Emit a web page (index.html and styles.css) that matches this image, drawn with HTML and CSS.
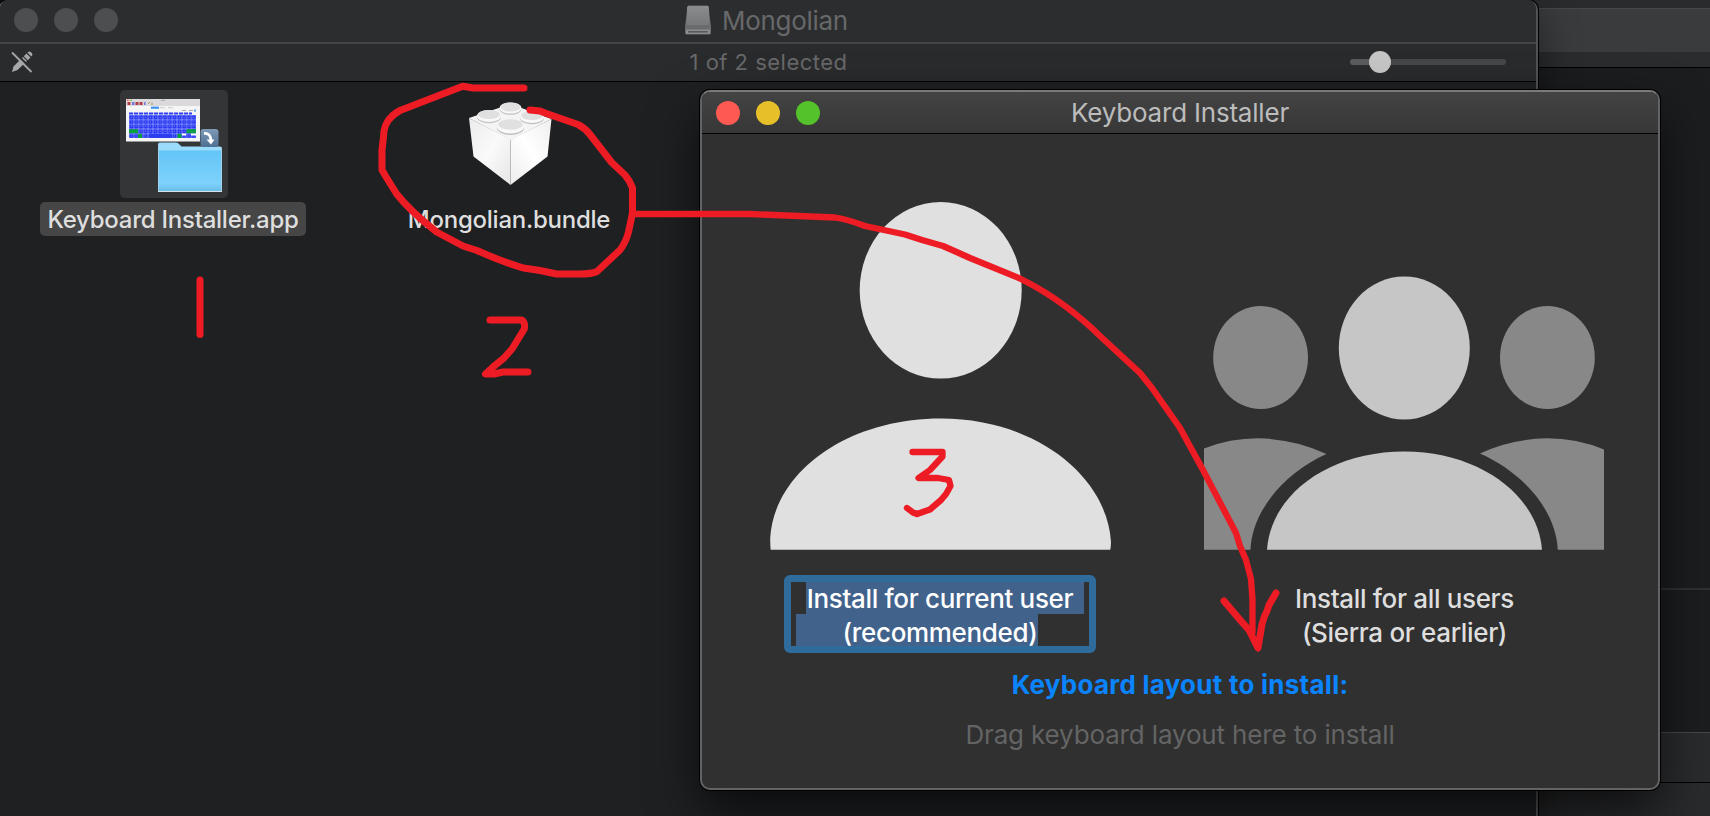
FILE: index.html
```
<!DOCTYPE html>
<html lang="en">
<head>
<meta charset="utf-8">
<title>Keyboard Installer</title>
<link rel="stylesheet" href="styles.css">
</head>
<body>
<div class="desktop">
  <section class="back-window">
    <div class="back-top"></div>
    <div class="back-tabs"></div>
    <div class="back-strip"></div>
    <div class="back-pane"></div>
    <div class="back-pane back-pane-low"></div>
    <div class="back-status"></div>
    <div class="back-foot"></div>
  </section>

  <section class="finder">
    <header class="finder-title">
      <div class="lights lights-off"><i></i><i></i><i></i></div>
      <div class="finder-name">
        <svg width="26" height="30" viewBox="0 0 26 30">
          <defs><linearGradient id="drive" x1="0" y1="0" x2="0" y2="1"><stop offset="0" stop-color="#8b8c8e"/><stop offset="1" stop-color="#77787a"/></linearGradient></defs>
          <path d="M3 .5H23L26 21V27.500Q26 29.500 24.500 29.500H1.500Q0 29.500 0 27.500V21Z" fill="#6a6b6d"/>
          <path d="M3.500 1H22.500Q24 1 24 3L24.500 19Q24.500 20 23 20H3Q1.500 20 1.500 19L2 3Q2 1 3.500 1Z" fill="url(#drive)"/>
          <path d="M1 24.500H25V29H1Z" fill="#8c8d8f"/>
          <path d="M3 26.800H23" stroke="#56575a" stroke-width="1.500"/>
        </svg>
        <span>Mongolian</span>
      </div>
    </header>
    <div class="finder-bar">
      <svg class="pencil" width="22" height="22" viewBox="0 0 22 22">
        <path d="M1 21L2.500 15.500L12 6L16 10L6.500 19Z" fill="#a6a7a8"/>
        <path d="M12.800 5.200L15.500 2.500L19.500 6.500L16.800 9.200Z" fill="#a6a7a8"/>
        <path d="M16.500 1.700L17.500 .7Q18.700 0 20 1.200L20.800 2Q22 3.500 21 4.700L20.300 5.500Z" fill="#a6a7a8"/>
        <path d="M2.500 0L22 19.500" stroke="#2c2d2f" stroke-width="2.200"/>
        <path d="M1 1.500L20.500 21" stroke="#a6a7a8" stroke-width="1.800"/>
      </svg>
      <span class="status">1 of 2 selected</span>
      <div class="slider"><i class="knob"></i></div>
    </div>
    <div class="files">
      <div class="file selected">
        <div class="thumb">
          <svg width="108" height="108" viewBox="0 0 108 108">
            <defs>
              <linearGradient id="folder" x1="0" y1="0" x2="0" y2="1"><stop offset="0" stop-color="#63c5f7"/><stop offset=".8" stop-color="#7ed2fb"/><stop offset="1" stop-color="#68bce6"/></linearGradient>
              <linearGradient id="badge" x1="0" y1="0" x2="0" y2="1"><stop offset="0" stop-color="#7e9bb8"/><stop offset="1" stop-color="#4d6f91"/></linearGradient>
              <pattern id="keys" width="4.800" height="4.700" patternUnits="userSpaceOnUse" x="9" y="25"><rect width="4.800" height="4.700" fill="#98a3ff"/><rect x=".4" y=".4" width="4" height="3.800" fill="#1c2df0"/><rect x="1.700" y="1.600" width="1.300" height="1.200" fill="#7b86fa"/></pattern>
            </defs>
            <rect x="6" y="9" width="74" height="42.500" fill="#f5f5f6"/>
            <rect x="6" y="9" width="74" height="7" fill="#dcd9dc"/>
            <path d="M7 10.300H8.500" stroke="#e55" stroke-width="1.200"/><path d="M9 10.300H10.200" stroke="#eb4" stroke-width="1.200"/><path d="M10.800 10.300H12" stroke="#5b5" stroke-width="1.200"/>
            <path d="M41 10.300H45" stroke="#999" stroke-width=".8"/>
            <path d="M7.500 13.500H10.500M15.500 13.500H18.500M19.500 13.500H22.500" stroke="#b23b45" stroke-width="3"/>
            <path d="M12 13.500H14.500M24 13.500H25.500" stroke="#7377dd" stroke-width="2.800"/>
            <path d="M28 14L30 12M32 12.500V15" stroke="#aa9a60" stroke-width="1"/>
            <rect x="31" y="16.600" width="8" height="2.200" fill="#3d93f2"/><path d="M40 17.700H45M48 17.700H53" stroke="#c9c9cb" stroke-width="1"/>
            <path d="M62 20.500H66M69 20.500H73" stroke="#aaa" stroke-width="1"/><rect x="74" y="19.400" width="2" height="2.200" fill="#6ca7ee"/>
            <path d="M9 23.500H72" stroke="#2d3df0" stroke-width="2" stroke-dasharray="4.200 .8"/>
            <rect x="9" y="25" width="67" height="23" fill="url(#keys)"/>
            <rect x="9" y="39.200" width="9" height="4" fill="#08a043"/><rect x="66.500" y="39.200" width="9.500" height="4" fill="#08a043"/>
            <rect x="18" y="43.800" width="4" height="4.200" fill="#08a043"/><rect x="57.500" y="43.800" width="4" height="4.200" fill="#08a043"/>
            <rect x="29" y="43.800" width="23" height="4.200" fill="#2c3ff0"/>
            <path d="M62 44.500H66M71 44.500H76" stroke="#fff" stroke-width="1.800"/>
            <path d="M38 102V54.500Q38 52.500 40 52.500H56Q58 52.500 59 54L61.500 56.500H100Q102 56.500 102 58.500V102H38Z" fill="#9bdbfb"/>
            <path d="M38.500 60.500H101.500V101.500H38.500Z" fill="url(#folder)"/>
            <path d="M38 101.500H102" stroke="#d7e2e8" stroke-width="1"/>
            <path d="M38.500 54V101M101.500 58V101" stroke="#a9cfe3" stroke-width=".8"/>
            <rect x="80.500" y="39" width="18" height="18" rx="3" fill="url(#badge)"/>
            <path d="M84 43.500Q91 43 91 51" fill="none" stroke="#fff" stroke-width="2.800"/>
            <path d="M86.500 49.500H94.500L91 54.500Z" fill="#fff"/>
          </svg>
        </div>
        <span class="file-name">Keyboard Installer.app</span>
      </div>
      <div class="file">
        <div class="thumb">
          <svg width="108" height="108" viewBox="0 0 108 108">
            <defs>
              <linearGradient id="brickL" x1="0" y1="0" x2="1" y2="1"><stop offset="0" stop-color="#ececec"/><stop offset=".5" stop-color="#fafafa"/><stop offset="1" stop-color="#e6e6e6"/></linearGradient>
              <linearGradient id="brickR" x1="0" y1="1" x2="1" y2="0"><stop offset="0" stop-color="#ececec"/><stop offset=".5" stop-color="#fff"/><stop offset="1" stop-color="#efefef"/></linearGradient>
            </defs>
            <path d="M14 28L55.500 14L96.500 29L55.500 50Z" fill="#f4f4f4"/>
            <path d="M14 28L55.500 49.500V95L18.500 66.500Z" fill="url(#brickL)"/>
            <path d="M96.500 29L55.500 49.500V95L92.500 66.500Z" fill="url(#brickR)"/>
            <g fill="#c2c2c2"><ellipse cx="55.500" cy="19.200" rx="11" ry="5.600"/><ellipse cx="34" cy="27" rx="12" ry="6.200"/><ellipse cx="77" cy="28" rx="12" ry="6.200"/><ellipse cx="55.500" cy="38" rx="13.500" ry="7"/></g>
            <g fill="#f9f9f9"><ellipse cx="55.500" cy="18" rx="11" ry="5.500"/><ellipse cx="34" cy="26" rx="12" ry="6"/><ellipse cx="77" cy="27" rx="12" ry="6"/><ellipse cx="55.500" cy="36.500" rx="13.500" ry="7"/></g>
            <g fill="#e0e0e0"><ellipse cx="55.500" cy="17" rx="10" ry="4.500"/><ellipse cx="34" cy="24.500" rx="11" ry="4.600"/><ellipse cx="77" cy="25.500" rx="11" ry="4.600"/><ellipse cx="55.500" cy="34.500" rx="12.300" ry="5.200"/></g>
          </svg>
        </div>
        <span class="file-name">Mongolian.bundle</span>
      </div>
    </div>
  </section>

  <section class="dialog">
    <header class="dialog-title">
      <div class="lights"><i class="red"></i><i class="yellow"></i><i class="green"></i></div>
      <h1>Keyboard Installer</h1>
    </header>
    <div class="dialog-body">
      <div class="choices">
        <svg class="person" width="342" height="348" viewBox="0 0 342 348" fill="#e0e0e0">
          <ellipse cx="170.700" cy="88.300" rx="81" ry="88.300"/>
          <path d="M.7 347.700C.2 344 .2 340 .2 336C4 270 77 216.500 171 216.500S337 274 341 340Q341 344 340.300 347.700Z"/>
        </svg>
        <svg class="group" width="400" height="274" viewBox="0 0 400 274">
          <g fill="#888">
            <ellipse cx="56.600" cy="81.500" rx="47.400" ry="51.500"/>
            <ellipse cx="343.400" cy="81.500" rx="47.400" ry="51.500"/>
            <path d="M0 172.500Q26 162.300 54 162.300Q91 163 122.500 178C80 197 48 235 46.500 273.700H0Z"/>
            <path d="M400 173.500Q373 162.300 343 162.300Q306 163 276 177.500C320 197 352 235 353.800 273.700H400Z"/>
          </g>
          <g fill="#c6c6c6">
            <ellipse cx="200.300" cy="72" rx="65.500" ry="71.500"/>
            <path d="M63 273.700C67 218 125 175.500 200.500 175.500S334 220 338 273.700Z"/>
          </g>
        </svg>
      </div>
      <div class="labels">
        <div class="field">
          <p>Install for current user</p>
          <p>(recommended)</p>
        </div>
        <div class="plain"><p>Install for all users</p><p>(Sierra or earlier)</p></div>
      </div>
      <p class="prompt">Keyboard layout to install:</p>
      <p class="hint">Drag keyboard layout here to install</p>
    </div>
  </section>

  <svg class="marker" width="1710" height="816" viewBox="0 0 1710 816">
    <path d="M524 88H473L462.700 86.200L400 110.500Q394 113.500 388.500 120Q385 125 384 131Q383.500 138 382 150V170L385.500 176L396.700 194Q410 211 436.700 232L463 246L477 250.500Q500 261 523.300 268L540 270.500L556.700 274H579Q592 274 597 271.500L620 250Q626 242 628.500 232L632.500 213V188Q630 181 625 175L611.700 162.500L590 134.500Q585 128 578 124.500L545 113L540 111L530 110"/>
    <path class="thin" d="M632 214H750L835 217.500Q848 219.500 865 226L905 234.500L922 240L943 246L970 258L1020 278.500Q1045 291 1065 306Q1085 321 1100 336L1140 373L1152 388L1180 428L1203 470L1236 533L1240 546L1246 560L1251 579L1252.500 600V632"/>
    <path d="M1224 601L1241 621L1249 630L1258 648L1262 624Q1264 616 1267 611L1269 605L1276 593"/>
    <path d="M200 280V334.500"/>
    <path d="M490 320H521.500Q525.500 322 524.300 329L512 349L504 358L493 367L485.500 374H494L503 372H528"/>
    <path class="thin" d="M912.500 452H942.500V456.500L930 470L918.500 478H938L949 480L950.500 486L946 494L941 500L930 509.500L917 514L913 512.500L907 508"/>
  </svg>
</div>
</body>
</html>
```

FILE: styles.css
```
* { box-sizing: border-box; }
body { margin: 0; font-family: Inter, "Liberation Sans", sans-serif; color: #dedede; }
p, h1 { margin: 0; font-weight: 400; }
svg { display: block; }
.desktop { position: relative; width: 1710px; height: 816px; overflow: hidden; background: #111213; }

.back-window { position: absolute; left: 1500px; top: 0; width: 210px; height: 816px; display: flex; flex-direction: column; background: #1c1d1f; }
.back-top { height: 8px; background: #2a2b2d; }
.back-tabs { height: 44px; background: #3a3b3d; border-top: 1px solid #47484a; }
.back-strip { height: 16px; background: #2b2c2e; border-bottom: 1px solid #000; }
.back-pane { flex: 1; }
.back-pane-low { flex: 0 0 144px; border-top: 2px solid #303133; }
.back-status { height: 51px; background: #2a2b2d; border-top: 1px solid #47484a; border-bottom: 1px solid #000; }
.back-foot { height: 33px; background: #292a2c; }

.finder { position: absolute; left: -2px; top: 0; width: 1540px; height: 830px; background: #1e2022; border: 2px solid #515254; border-top: 0; border-radius: 10px 10px 0 0; box-shadow: 0 0 0 1px #000, 0 10px 40px rgba(0, 0, 0, .45); overflow: hidden; }
.finder-title { height: 44px; display: grid; grid-template-columns: 1fr auto 1fr; align-items: center; padding: 0 14px; background: #2c2d2f; border-bottom: 2px solid #434446; }
.lights { display: flex; gap: 16px; }
.lights i { width: 24px; height: 24px; border-radius: 50%; }
.lights-off { margin-top: -2px; }
.lights-off i { background: #4d4e50; }
.red { background: #ff5a52; }
.yellow { background: #e6c029; }
.green { background: #53c22b; }
.finder-name { display: flex; align-items: center; gap: 11px; height: 42px; padding: 0 3px 2px 0; font-size: 26px; letter-spacing: -.3px; color: #67686a; }
.finder-bar { height: 38px; display: grid; grid-template-columns: 1fr auto 1fr; align-items: center; padding: 0 30px 1px 11px; background: #2a2b2d; border-bottom: 1px solid #000; }
.status { font-size: 22px; letter-spacing: .48px; color: #67686a; margin-left: 20px; }
.slider { justify-self: end; width: 156px; height: 6px; border-radius: 3px; background: linear-gradient(90deg, #5b5c5e 30px, #464749 30px); display: flex; align-items: center; padding-left: 19px; }
.knob { width: 22px; height: 22px; border-radius: 50%; background: #c6c6c6; }
.files { display: grid; grid-template-columns: 266px 266px; gap: 70px; padding: 8px 40px; }
.file { display: flex; flex-direction: column; align-items: center; gap: 4px; }
.thumb { width: 108px; height: 108px; border-radius: 5px; }
.selected .thumb { background: #343537; margin-left: 2px; }
.file-name { height: 34px; line-height: 35px; padding: 0 7px; border-radius: 5px; font-size: 24px; font-weight: 500; letter-spacing: -.25px; white-space: nowrap; }
.selected .file-name { width: 266px; text-align: center; background: #464646; }

.dialog { position: absolute; left: 700px; top: 90px; width: 960px; height: 700px; background: #303030; border: 2px solid #626364; border-top-color: #7b7b7c; border-radius: 10px; box-shadow: 0 0 0 1px #000, 0 22px 50px rgba(0, 0, 0, .65); overflow: hidden; }
.dialog-title { height: 42px; display: grid; grid-template-columns: 1fr auto 1fr; align-items: center; padding: 0 14px; background: linear-gradient(#434343, #373737); border-bottom: 1px solid #000; }
.dialog-title h1 { font-size: 26px; letter-spacing: -.2px; color: #bcbcbc; }
.dialog-body { padding-top: 68px; }
.choices { height: 348px; display: flex; align-items: flex-end; justify-content: space-between; padding: 0 54px 0 68px; }
.labels { display: flex; justify-content: space-between; align-items: flex-start; padding: 25px 144px 0 82px; font-size: 26px; font-weight: 500; line-height: 34px; letter-spacing: -.34px; text-align: center; }
.labels p { font-weight: 500; }
.field {
  width: 312px; height: 78px; border: 7px solid #2f6c9b; border-radius: 6px; color: #fff;
  background:
    linear-gradient(#3483c4, #3483c4) 15px -2px / 278px 2px no-repeat border-box,
    linear-gradient(#41628b, #41628b) 15px 0 / 278px 32px no-repeat,
    linear-gradient(#41628b, #41628b) 5px 32px / 242px 32px no-repeat;
}
.field p { white-space: nowrap; }
.plain { padding-top: 7px; }
.prompt { margin-top: 15px; text-align: center; font-size: 26px; line-height: 34px; font-weight: 700; letter-spacing: .25px; color: #0a84ff; }
.hint { margin-top: 16px; text-align: center; font-size: 26px; line-height: 34px; letter-spacing: -.15px; color: #646464; }

.marker { position: absolute; left: 0; top: 0; fill: none; stroke: #ed1c24; stroke-width: 7; stroke-linecap: round; stroke-linejoin: round; }
.thin { stroke-width: 6.3; }
```
